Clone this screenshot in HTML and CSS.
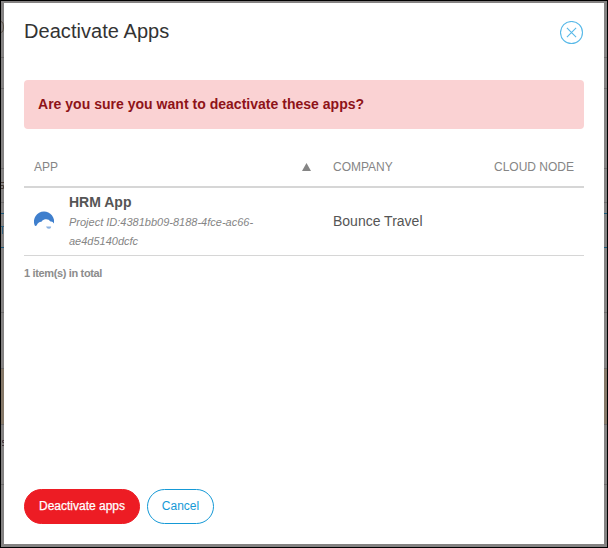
FILE: index.html
```html
<!DOCTYPE html>
<html lang="en">
<head>
<meta charset="utf-8">
<title>Deactivate Apps</title>
<link rel="stylesheet" href="styles.css">
</head>
<body>
<div class="page" aria-hidden="true">
  <div class="band band-title"><svg class="peek" width="3" height="12" viewBox="0 0 3 12"><path d="M0 .5Q2.5 1 2.5 6T0 11.5" fill="none" stroke="#5c5348"/></svg></div>
  <div class="band band-tabs"></div>
  <div class="band band-tools"></div>
  <div class="band band-text"><svg class="peek" width="3" height="7" viewBox="0 0 3 7"><path d="M0 .5h3M0 3.5h2.5v3H0" fill="none" stroke="#4a3f38"/></svg></div>
  <div class="band band-gap"></div>
  <div class="band band-filter"><svg class="peek" width="3" height="8" viewBox="0 0 3 8"><path d="M0 .5h3M1.5 1v7" fill="none" stroke="#30617e"/></svg></div>
  <div class="band band-row"></div>
  <div class="band band-head"></div>
  <div class="band band-selected"></div>
  <div class="band band-item"><svg class="peek" width="3" height="6" viewBox="0 0 3 6"><path d="M3 .5H1.5v2H3M1 5.5h2" fill="none" stroke="#4a3a40"/></svg></div>
  <div class="band band-rest"></div>
</div>
<main class="modal" role="dialog" aria-labelledby="title">
  <header class="modal-header">
    <h1 class="title" id="title">Deactivate Apps</h1>
    <button class="close" aria-label="Close">
      <svg width="24" height="24" viewBox="0 0 24 24" fill="none" stroke="#58b9e8" stroke-width="1.1"><circle cx="11.5" cy="11.5" r="11"/><path d="M6.9 6.9l9.2 9.2M16.1 6.9l-9.2 9.2"/></svg>
    </button>
  </header>
  <div class="alert">Are you sure you want to deactivate these apps?</div>
  <section class="list">
    <div class="row head">
      <div class="cell app-head"><span>APP</span><svg class="sort" width="9" height="8" viewBox="0 0 9 8"><path d="M4.5 0L9 8H0z" fill="#858585"/></svg></div>
      <div class="cell">COMPANY</div>
      <div class="cell node">CLOUD NODE</div>
    </div>
    <div class="row item">
      <div class="cell app">
        <svg class="app-icon" width="20" height="20" viewBox="0 0 20 20"><path d="M.9 14.8A10 10 0 0 1 10 .5A10 10 0 0 1 19.9 12.6Q18.8 10.2 16.5 10.6Q14.4 7.6 11 8.3Q8.2 8.8 7.4 10.8Q4 10.8 2.8 14.3Q1.8 15.2 .9 14.8z" fill="#3f7fcd"/><path d="M12 15.4h5.2Q17 17.9 15 17.8Q12.8 17.9 12 15.4z" fill="#8bb2e1"/></svg>
        <div class="app-info">
          <div class="app-name">HRM App</div>
          <div class="project">Project ID:4381bb09-8188-4fce-ac66-<br>ae4d5140dcfc</div>
        </div>
      </div>
      <div class="cell company">Bounce Travel</div>
      <div class="cell"></div>
    </div>
  </section>
  <p class="total">1 item(s) in total</p>
  <footer class="actions">
    <button class="btn btn-danger">Deactivate apps</button>
    <button class="btn btn-plain">Cancel</button>
  </footer>
</main>
</body>
</html>
```
FILE: styles.css
```css
* { box-sizing: border-box; }
body {
  margin: 0;
  width: 608px;
  height: 548px;
  overflow: hidden;
  position: relative;
  font-family: "Liberation Sans", Arial, sans-serif;
  color: #555;
}
.page {
  height: 548px;
  border: 1px solid #000;
  background: #848282;
  display: flex;
  flex-direction: column;
}
.band { flex: none; overflow: hidden; border-bottom: 1px solid #6d6b6b; }
.band-title { height: 57px; padding-top: 20px; }
.band-tabs { height: 31px; }
.band-tools { height: 80px; }
.band-text { height: 34px; padding-top: 13px; }
.band-gap { height: 11px; border-color: #1c5a7c; }
.band-filter { height: 34px; padding-top: 12px; border-color: #1c5a7c; }
.band-row { height: 65px; }
.band-head { height: 56px; }
.band-selected { height: 56px; background: #857868; }
.band-item { height: 60px; padding-top: 15px; }
.band-rest { flex: 1; border: 0; }
.peek { display: block; }

.modal {
  position: absolute;
  top: 3px;
  left: 4px;
  width: 600px;
  height: 541px;
  padding: 16px 20px 20px;
  background: #fff;
  display: flex;
  flex-direction: column;
}
.modal-header { display: flex; justify-content: space-between; height: 61px; }
.title { margin: 0; font-size: 20px; font-weight: 400; line-height: 24px; letter-spacing: .05px; color: #333; }
.close { width: 24px; height: 24px; margin-top: 2px; padding: 0; border: 0; background: none; }
.close svg { display: block; }
.alert {
  height: 49px;
  padding-left: 14px;
  border-radius: 4px;
  background: #fad2d3;
  color: #8e1318;
  font-size: 14px;
  font-weight: 700;
  line-height: 49px;
  letter-spacing: .02px;
}
.list { margin-top: 18px; }
.row { display: grid; grid-template-columns: 299px 161px 1fr; }
.cell { padding-left: 10px; }
.head { height: 41px; border-bottom: 2px solid #d6d6d6; font-size: 12px; line-height: 40px; color: #858585; }
.app-head { display: flex; align-items: center; justify-content: space-between; padding-right: 12px; }
.item { height: 68px; border-bottom: 1px solid #d6d6d6; align-items: center; }
.app { display: flex; align-items: center; }
.app-icon { flex: none; margin: 0 15px 2px 0; }
.app-name { font-size: 14px; font-weight: 700; line-height: 18px; padding-bottom: 2px; }
.project { font-size: 11px; font-style: italic; line-height: 19px; color: #858585; }
.company { font-size: 14px; padding-bottom: 2px; }
.total { margin: 10px 0 0; font-size: 11px; font-weight: 700; line-height: 14px; letter-spacing: -.35px; color: #8c8c8c; }
.actions { display: flex; gap: 7px; margin-top: auto; }
.btn {
  height: 35px;
  padding: 0 0 2px;
  border: 1px solid #ed1c24;
  border-radius: 18px;
  font: 12px "Liberation Sans", Arial, sans-serif;
}
.btn-danger { width: 116px; background: #ed1c24; color: #fff; -webkit-text-stroke: .25px #fff; }
.btn-plain { width: 67px; background: #fff; border-color: #1599d6; color: #1599d6; }
```
